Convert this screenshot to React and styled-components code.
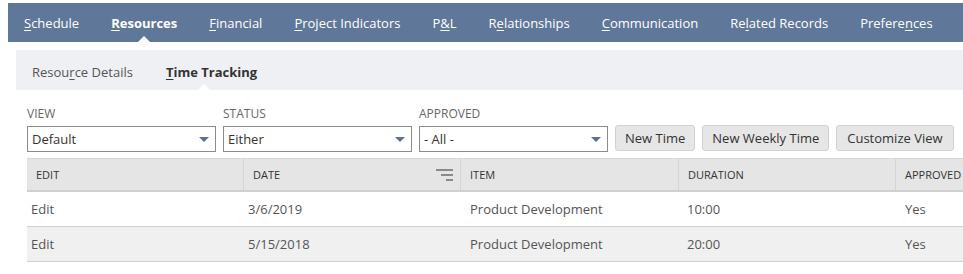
import styled, { createGlobalStyle } from "styled-components";

const GlobalStyle = createGlobalStyle`
    html, body {
        margin: 0;
        padding: 0;
        background: #fff;
        overflow: hidden;
    }
    body {
        padding: 3px 0 0 8px;
        font-family: "Open Sans", "Liberation Sans", sans-serif;
    }
`;

const mainTabs = [
    { label: "Schedule", key: 0 },
    { label: "Resources", key: 0, active: true },
    { label: "Financial", key: 0 },
    { label: "Project Indicators", key: 0 },
    { label: "P&L", key: 1 },
    { label: "Relationships", key: 1 },
    { label: "Communication", key: 0 },
    { label: "Related Records", key: 2 },
    { label: "Preferences", key: 7 },
];

const subTabs = [
    { label: "Resource Details", key: 5 },
    { label: "Time Tracking", key: 0, active: true },
];

const filters = [
    { label: "VIEW", value: "Default" },
    { label: "STATUS", value: "Either" },
    { label: "APPROVED", value: "- All -" },
];

const columns = ["EDIT", "DATE", "ITEM", "DURATION", "APPROVED"];
const cellPad = [4, 5, 10, 9, 10];

const rows = [
    ["Edit", "3/6/2019", "Product Development", "10:00", "Yes"],
    ["Edit", "5/15/2018", "Product Development", "20:00", "Yes"],
];

const Hotkey = ({ text, index }) => (
    <>
        {text.slice(0, index)}
        <u>{text[index]}</u>
        {text.slice(index + 1)}
    </>
);

const App = () => {
    return (
        <>
            <GlobalStyle />
            <Page>
                <MainNav>
                    {mainTabs.map((t) => (
                        <MainTab key={t.label} $active={t.active}>
                            <Hotkey text={t.label} index={t.key} />
                        </MainTab>
                    ))}
                </MainNav>
                <SubNav>
                    {subTabs.map((t) => (
                        <SubTab key={t.label} $active={t.active}>
                            <Hotkey text={t.label} index={t.key} />
                        </SubTab>
                    ))}
                </SubNav>
                <Toolbar>
                    {filters.map((f) => (
                        <Field key={f.label}>
                            <FieldLabel>{f.label}</FieldLabel>
                            <Select>
                                <span>{f.value}</span>
                                <Caret />
                            </Select>
                        </Field>
                    ))}
                    <Button>New Time</Button>
                    <Button>New Weekly Time</Button>
                    <Button $wide>Customize View</Button>
                </Toolbar>
                <Table>
                    <HeadRow>
                        {columns.map((c) => (
                            <HeadCell key={c}>
                                {c}
                                {c === "DATE" && (
                                    <SortIcon width="17" height="14" viewBox="0 0 17 14">
                                        <rect x="0" y="1" width="17" height="2" fill="#8a8a8a" />
                                        <rect x="5" y="6" width="12" height="2" fill="#8a8a8a" />
                                        <rect x="10" y="11" width="7" height="2" fill="#8a8a8a" />
                                    </SortIcon>
                                )}
                            </HeadCell>
                        ))}
                    </HeadRow>
                    {rows.map((r, i) => (
                        <Row key={i} $alt={i % 2 === 1}>
                            {r.map((v, j) => (
                                <Cell key={j} $pad={cellPad[j]}>
                                    {v}
                                </Cell>
                            ))}
                        </Row>
                    ))}
                </Table>
            </Page>
        </>
    );
};

const Page = styled.div`
    width: 1000px;
`;

const MainNav = styled.nav`
    display: flex;
    height: 39px;
    align-items: center;
    background-color: #5f7798;
`;

const MainTab = styled.div`
    position: relative;
    height: 100%;
    display: flex;
    align-items: center;
    padding: 1px 16px 0;
    box-sizing: border-box;
    font-size: 13px;
    color: #fff;
    font-weight: ${(p) => (p.$active ? 700 : 400)};

    u {
        text-underline-offset: 2px;
    }

    ${(p) =>
        p.$active &&
        `
        &::after {
            content: "";
            position: absolute;
            left: 50%;
            bottom: 0;
            margin-left: -6px;
            border-left: 6px solid transparent;
            border-right: 6px solid transparent;
            border-bottom: 6px solid #fff;
        }
    `}
`;

const SubNav = styled.div`
    display: flex;
    align-items: center;
    height: 40px;
    margin: 8px 0 0 8px;
    padding-left: 8px;
    background-color: #eff0f4;
`;

const SubTab = styled.div`
    position: relative;
    height: 100%;
    display: flex;
    align-items: center;
    box-sizing: border-box;
    padding: 3px 16px 0 8px;
    margin-right: 9px;
    font-size: 13px;
    color: ${(p) => (p.$active ? "#333" : "#555")};
    font-weight: ${(p) => (p.$active ? 700 : 400)};

    u {
        text-underline-offset: 2px;
    }

    ${(p) =>
        p.$active &&
        `
        &::after {
            content: "";
            position: absolute;
            left: 40px;
            bottom: 0;
            border-left: 6px solid transparent;
            border-right: 6px solid transparent;
            border-bottom: 6px solid #fff;
        }
    `}
`;

const Toolbar = styled.div`
    display: flex;
    align-items: flex-end;
    gap: 7px;
    margin: 16px 0 0 19px;
`;

const Field = styled.div`
    display: flex;
    flex-direction: column;
`;

const FieldLabel = styled.label`
    font-size: 12px;
    color: #666;
    line-height: 16px;
    margin-bottom: 4px;
`;

const Select = styled.div`
    box-sizing: border-box;
    width: 189px;
    height: 26px;
    display: flex;
    align-items: center;
    justify-content: space-between;
    padding: 0 6px 0 4px;
    border: 1px solid #8c8c8c;
    font-size: 13px;
    color: #333;
`;

const Caret = styled.i`
    width: 0;
    height: 0;
    border-left: 5px solid transparent;
    border-right: 5px solid transparent;
    border-top: 5px solid #5f7090;
`;

const Button = styled.button`
    height: 26px;
    margin-bottom: 1px;
    padding: 0 ${(p) => (p.$wide ? "10px" : "9px")};
    font-family: inherit;
    font-size: 13px;
    color: #333;
    background-color: #e6e6e6;
    border: 1px solid #d2d2d2;
    border-radius: 3px;
`;

const Table = styled.div`
    margin: 6px 0 0 19px;
`;

const grid = `
    display: grid;
    grid-template-columns: 216px 217px 218px 217px 1fr;
`;

const HeadRow = styled.div`
    ${grid}
    height: 31px;
    background-color: #e5e5e5;
    border-top: 1px solid #d8d8d8;
    border-bottom: 2px solid #d0d0d0;
`;

const HeadCell = styled.div`
    display: flex;
    align-items: center;
    justify-content: space-between;
    padding: 0 9px;
    font-size: 11px;
    color: #333;
    border-left: 1px solid #d4d4d4;

    &:first-child {
        border-left: none;
    }
`;

const SortIcon = styled.svg`
    margin-right: -2px;
`;

const Row = styled.div`
    ${grid}
    height: 34px;
    background-color: ${(p) => (p.$alt ? "#f0f0f0" : "#fff")};
    border-bottom: 1px solid #cfcfcf;
`;

const Cell = styled.div`
    display: flex;
    align-items: center;
    padding: 0 ${(p) => p.$pad}px;
    font-size: 13px;
    color: #555;
`;

export default App;
